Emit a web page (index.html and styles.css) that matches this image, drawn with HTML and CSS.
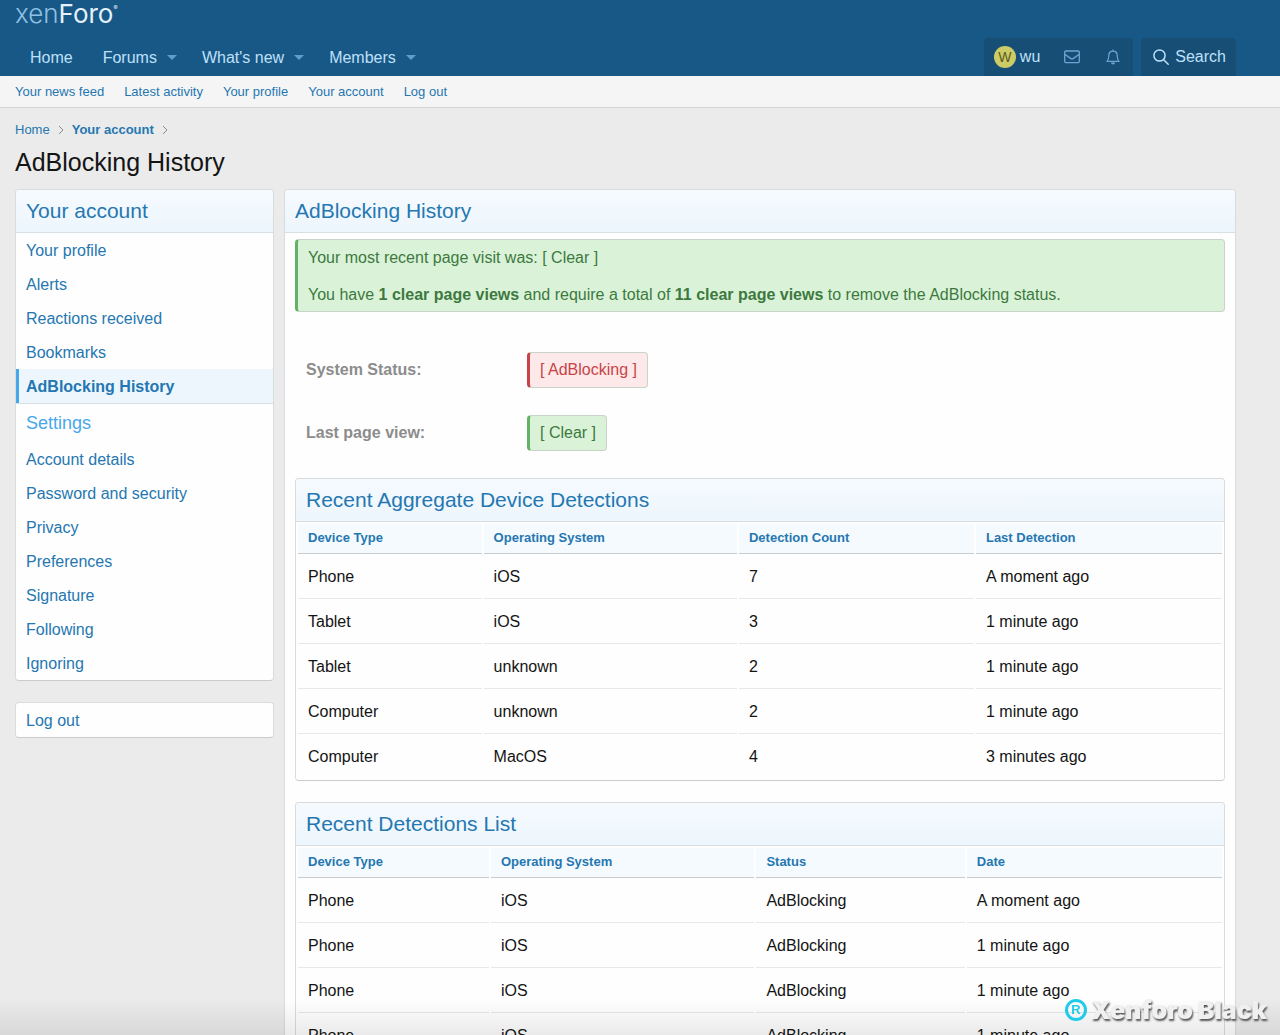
FILE: index.html
```html
<!doctype html>
<html lang="en">
<head>
  <meta charset="UTF-8">
  <meta name="viewport" content="width=device-width, initial-scale=1.0">
  <title>AdBlocking History | XenForo</title>
  <link rel="stylesheet" href="styles.css">
</head>
<body>
<header class="page-header">
  <a class="logo" href="#"><span class="logo-thin">xen</span>Foro<sup class="logo-mark">®</sup></a>
  <div class="nav-bar">
    <nav class="nav">
      <a class="nav-link" href="#">Home</a>
      <a class="nav-link" href="#">Forums</a>
      <button class="nav-toggle" type="button" aria-label="Toggle forums"></button>
      <a class="nav-link" href="#">What's new</a>
      <button class="nav-toggle" type="button" aria-label="Toggle what's new"></button>
      <a class="nav-link" href="#">Members</a>
      <button class="nav-toggle" type="button" aria-label="Toggle members"></button>
    </nav>
    <div class="nav-tools">
      <div class="nav-group">
        <a class="nav-user" href="#"><span class="avatar">W</span>wu</a>
        <a class="nav-icon" href="#" aria-label="Conversations">
          <svg width="16" height="14" viewBox="0 0 16 14" fill="none" stroke="currentColor" stroke-width="1.3">
            <rect x="0.7" y="1" width="14.6" height="11.6" rx="1"/>
            <path d="M0.8 4.2 L6.6 8.4 Q8 9.4 9.4 8.4 L15.2 4.2"/>
          </svg>
        </a>
        <a class="nav-icon" href="#" aria-label="Alerts">
          <svg width="14" height="16" viewBox="0 0 14 16" fill="none" stroke="currentColor" stroke-width="1.2" stroke-linejoin="round">
            <path d="M7 0.4 V2 M1 12.4 C2.6 10.8 2.8 9.4 2.8 6.6 C2.8 3.8 4.6 2.1 7 2.1 C9.4 2.1 11.2 3.8 11.2 6.6 C11.2 9.4 11.4 10.8 13 12.4 Z"/>
            <path d="M5 13.6 H9 C9 14.8 8.1 15.5 7 15.5 C5.9 15.5 5 14.8 5 13.6 Z" fill="currentColor" stroke="none"/>
          </svg>
        </a>
      </div>
      <a class="nav-group nav-search" href="#">
        <svg width="16" height="16" viewBox="0 0 16 16" fill="none" stroke="currentColor" stroke-width="1.5" stroke-linecap="round">
          <circle cx="6.5" cy="6.5" r="5.6"/>
          <path d="M10.7 10.7 L15.2 15.2"/>
        </svg>
        Search
      </a>
    </div>
  </div>
</header>

<nav class="sub-nav">
  <a href="#">Your news feed</a>
  <a href="#">Latest activity</a>
  <a href="#">Your profile</a>
  <a href="#">Your account</a>
  <a href="#">Log out</a>
</nav>

<div class="page-body">
  <nav class="breadcrumbs">
    <a href="#">Home</a>
    <svg class="chevron" width="6" height="10" viewBox="0 0 6 10"><path d="M1 1 L5 5 L1 9"/></svg>
    <a class="is-current" href="#">Your account</a>
    <svg class="chevron" width="6" height="10" viewBox="0 0 6 10"><path d="M1 1 L5 5 L1 9"/></svg>
  </nav>
  <h1 class="page-title">AdBlocking History</h1>

  <div class="columns">
    <aside class="sidebar">
      <div class="block">
        <h2 class="block-header">Your account</h2>
        <a class="side-link" href="#">Your profile</a>
        <a class="side-link" href="#">Alerts</a>
        <a class="side-link" href="#">Reactions received</a>
        <a class="side-link" href="#">Bookmarks</a>
        <a class="side-link is-selected" href="#">AdBlocking History</a>
        <h3 class="side-title">Settings</h3>
        <a class="side-link" href="#">Account details</a>
        <a class="side-link" href="#">Password and security</a>
        <a class="side-link" href="#">Privacy</a>
        <a class="side-link" href="#">Preferences</a>
        <a class="side-link" href="#">Signature</a>
        <a class="side-link" href="#">Following</a>
        <a class="side-link" href="#">Ignoring</a>
      </div>
      <div class="block">
        <a class="side-link" href="#">Log out</a>
      </div>
    </aside>

    <main class="block content">
      <h2 class="block-header">AdBlocking History</h2>
      <div class="content-body">
        <div class="message message-clear">
          <p>Your most recent page visit was: [ Clear ]</p>
          <p>You have <strong>1 clear page views</strong> and require a total of <strong>11 clear page views</strong> to remove the AdBlocking status.</p>
        </div>

        <dl class="status-list">
          <dt>System Status:</dt>
          <dd><span class="status status-blocking">[ AdBlocking ]</span></dd>
          <dt>Last page view:</dt>
          <dd><span class="status status-clear">[ Clear ]</span></dd>
        </dl>

        <section class="block">
          <h2 class="block-header">Recent Aggregate Device Detections</h2>
          <table class="data-table device-table">
            <thead>
              <tr><th>Device Type</th><th>Operating System</th><th>Detection Count</th><th>Last Detection</th></tr>
            </thead>
            <tbody>
              <tr><td>Phone</td><td>iOS</td><td>7</td><td>A moment ago</td></tr>
              <tr><td>Tablet</td><td>iOS</td><td>3</td><td>1 minute ago</td></tr>
              <tr><td>Tablet</td><td>unknown</td><td>2</td><td>1 minute ago</td></tr>
              <tr><td>Computer</td><td>unknown</td><td>2</td><td>1 minute ago</td></tr>
              <tr><td>Computer</td><td>MacOS</td><td>4</td><td>3 minutes ago</td></tr>
            </tbody>
          </table>
        </section>

        <section class="block">
          <h2 class="block-header">Recent Detections List</h2>
          <table class="data-table detection-table">
            <thead>
              <tr><th>Device Type</th><th>Operating System</th><th>Status</th><th>Date</th></tr>
            </thead>
            <tbody>
              <tr><td>Phone</td><td>iOS</td><td>AdBlocking</td><td>A moment ago</td></tr>
              <tr><td>Phone</td><td>iOS</td><td>AdBlocking</td><td>1 minute ago</td></tr>
              <tr><td>Phone</td><td>iOS</td><td>AdBlocking</td><td>1 minute ago</td></tr>
              <tr><td>Phone</td><td>iOS</td><td>AdBlocking</td><td>1 minute ago</td></tr>
            </tbody>
          </table>
        </section>
      </div>
    </main>
  </div>
</div>

<div class="bottom-shade"></div>
<div class="watermark">
  <span class="watermark-badge">R</span>
  <span class="watermark-text">Xenforo Black</span>
</div>
</body>
</html>
```
FILE: styles.css
```css
* {
  box-sizing: border-box;
}

body {
  margin: 0;
  background: #ebebeb;
  color: #141414;
  font-family: "Liberation Sans", Arial, sans-serif;
  font-size: 16px;
  line-height: 22px;
}

a {
  color: #2577b1;
  text-decoration: none;
}

h1, h2, h3, p, dl, dd {
  margin: 0;
}

/* header */
.page-header {
  padding: 0 44px 0 15px;
  background: #185886;
}

.logo {
  display: flex;
  height: 38px;
  color: #e4f1fb;
  font-family: Inter, "Liberation Sans", sans-serif;
  font-size: 26px;
  font-weight: 400;
  line-height: 28px;
}

.logo-thin {
  color: #8fc0e4;
  font-weight: 300;
}

.logo-mark {
  font-size: 6px;
  line-height: 16px;
}

.nav-bar,
.nav,
.nav-tools,
.nav-group {
  display: flex;
}

.nav-bar {
  justify-content: space-between;
  height: 38px;
}

.nav-link {
  padding: 0 15px;
  color: #bfe0fa;
  line-height: 39px;
}

.nav-toggle {
  width: 20px;
  margin-left: -5px;
  padding: 0;
  border: 0;
  background: none;
}

.nav-toggle::after {
  content: "";
  display: block;
  width: 0;
  border: 5px solid transparent;
  border-top-color: #5f9dcb;
  border-bottom-width: 0;
}

.nav-tools {
  gap: 8px;
}

.nav-group {
  align-items: center;
  border-radius: 4px 4px 0 0;
  background: #164e76;
  color: #bfe0fa;
}

.nav-user {
  display: flex;
  align-items: center;
  gap: 4px;
  padding: 0 11px 0 10px;
  color: #bfe0fa;
}

.avatar {
  width: 22px;
  height: 22px;
  border-radius: 50%;
  background: #cccc66;
  color: #5c5c1f;
  font-size: 14px;
  text-align: center;
}

.nav-icon {
  display: flex;
  justify-content: center;
  width: 41px;
  color: #6ba6d2;
}

.nav-search {
  gap: 6px;
  padding: 0 10px 0 12px;
}

.sub-nav {
  display: flex;
  gap: 20px;
  height: 32px;
  padding: 0 15px;
  border-bottom: 1px solid #d4d4d4;
  background: #f5f5f5;
  font-size: 13px;
  line-height: 31px;
}

/* page */
.page-body {
  padding: 12px 44px 24px 15px;
}

.breadcrumbs {
  display: flex;
  align-items: center;
  gap: 8px;
  height: 19px;
  font-size: 13px;
}

.breadcrumbs .is-current {
  font-weight: 700;
}

.chevron {
  fill: none;
  stroke: #8c8c8c;
}

.page-title {
  padding: 7px 0 11px;
  font-size: 25px;
  font-weight: 400;
  line-height: 32px;
}

.columns {
  display: flex;
  gap: 10px;
  align-items: flex-start;
}

.sidebar {
  flex: none;
  width: 259px;
}

.content {
  flex: 1;
}

.block {
  overflow: hidden;
  margin-bottom: 21px;
  border: 1px solid #d8dcdf;
  border-bottom-color: #c9cccf;
  border-radius: 4px;
  background: #fefefe;
}

.block-header {
  padding: 6px 10px;
  border-bottom: 1px solid #d8dfe4;
  background: linear-gradient(#f5fafe, #edf6fd);
  color: #2577b1;
  font-size: 21px;
  font-weight: 400;
  line-height: 30px;
}

.side-link {
  display: block;
  padding: 7px 10px 5px;
}

.side-link.is-selected {
  padding-left: 7px;
  border-left: 3px solid #47a7eb;
  background: #edf6fd;
  font-weight: 700;
}

.side-title {
  padding: 8px 10px;
  border-top: 1px solid #d8dfe4;
  color: #47a7eb;
  font-size: 18px;
  font-weight: 400;
}

/* content */
.content-body {
  padding: 6px 10px 10px;
}

.message,
.status {
  border: 1px solid #c9d3c9;
  border-left-width: 3px;
  border-radius: 4px;
}

.message {
  padding: 7px 10px 5px;
}

.message p + p {
  margin-top: 15px;
}

.message-clear,
.status-clear {
  border-left-color: #63b265;
  background: #daf3d8;
  color: #3d793f;
}

.status-blocking {
  border-left-color: #c84448;
  background: #fde9e9;
  color: #c84448;
}

.status-list {
  display: grid;
  grid-template-columns: 221px 1fr;
  row-gap: 27px;
  align-items: center;
  padding: 40px 11px 27px;
}

.status-list dt {
  color: #8c8c8c;
  font-weight: 700;
}

.status {
  display: inline-block;
  padding: 6px 10px;
}

.data-table {
  width: 100%;
  border-spacing: 2px;
  table-layout: fixed;
}

.data-table th,
.data-table td {
  padding: 10px;
  border-bottom: 1px solid #e8e8e8;
  text-align: left;
}

.data-table th {
  padding: 3px 10px 4px;
  border-bottom-color: #c9cccf;
  background: #f5fafe;
  color: #2577b1;
  font-size: 13px;
}

.data-table tr:last-child td {
  border-bottom: 0;
}

.device-table th:nth-child(1) { width: 20%; }
.device-table th:nth-child(2) { width: 27.6%; }
.device-table th:nth-child(3) { width: 25.6%; }

.detection-table th:nth-child(1) { width: 20.8%; }
.detection-table th:nth-child(2) { width: 28.7%; }
.detection-table th:nth-child(3) { width: 22.7%; }

/* overlays */
.bottom-shade {
  position: fixed;
  right: 0;
  bottom: 0;
  left: 0;
  height: 36px;
  background: linear-gradient(transparent, rgba(0, 0, 0, 0.08));
}

.watermark {
  position: fixed;
  right: 13px;
  bottom: 10px;
  display: flex;
  align-items: center;
  gap: 4px;
  line-height: 30px;
}

.watermark-badge {
  width: 22px;
  height: 22px;
  border: 3px solid #1fcbe8;
  border-radius: 50%;
  color: #1fcbe8;
  font-size: 13px;
  font-weight: 700;
  line-height: 16px;
  text-align: center;
}

.watermark-text {
  color: #f0f0f0;
  font-family: Inter, "Liberation Sans", sans-serif;
  font-size: 25px;
  font-weight: 900;
  text-shadow: 1px 2px 2px #555;
}
```
